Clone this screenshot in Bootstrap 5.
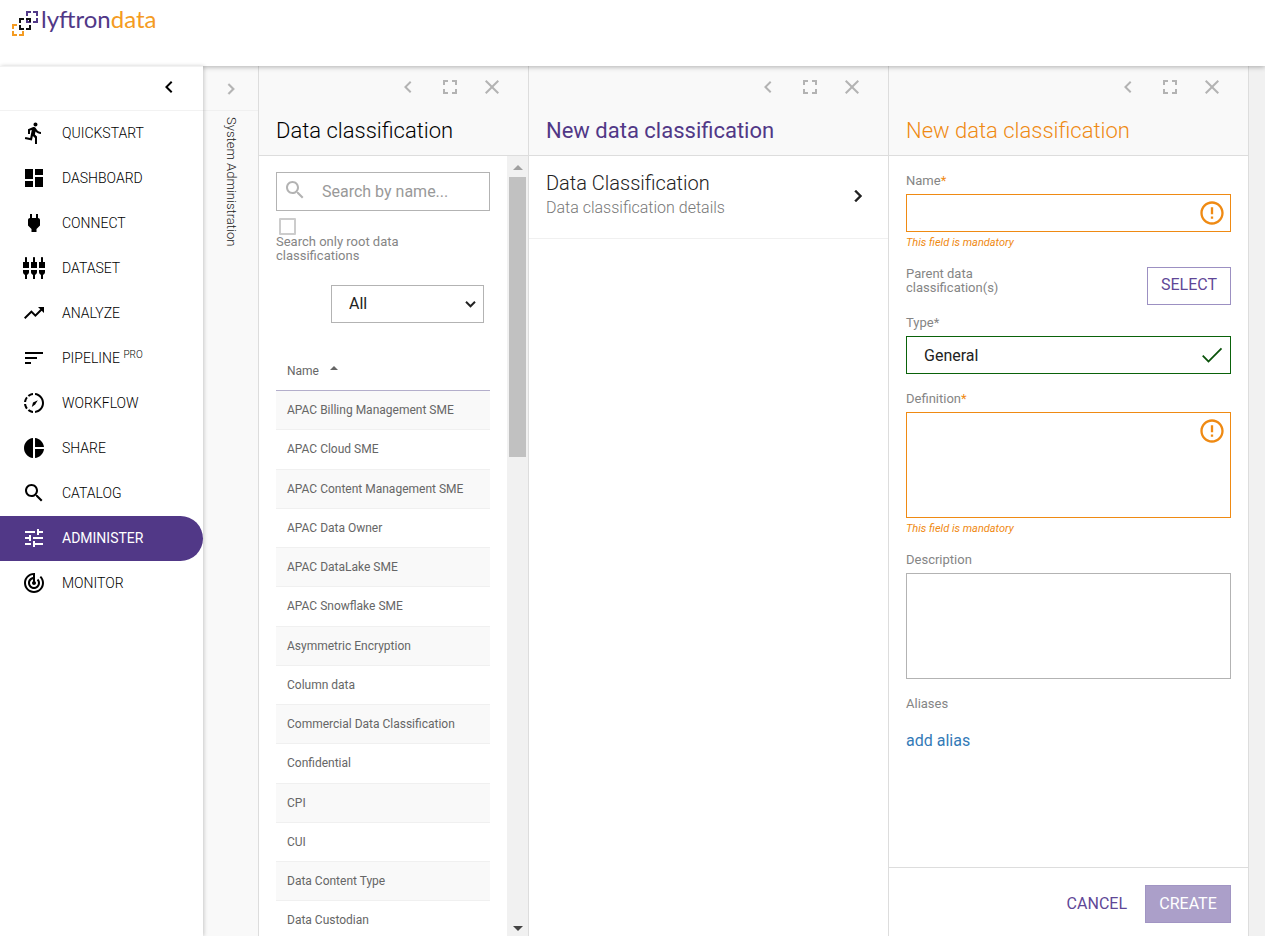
<!DOCTYPE html>
<html lang="en">
<head>
<meta charset="utf-8">
<meta name="viewport" content="width=device-width, initial-scale=1">
<title>Lyftrondata – Data classification</title>
<link href="https://cdn.jsdelivr.net/npm/bootstrap@5.3.0/dist/css/bootstrap.min.css" rel="stylesheet">
<style>
:root { --purple: #513887; --orange: #ef8a13; --grey: #b3b3b3; --line: #ddd; }
body { font-family: Roboto, "Liberation Sans", sans-serif; font-size: 16px; line-height: 20px; color: #222; background: #f1f1f1; }
svg { fill: currentColor; flex: none; display: block; }
.i22 { width: 22px; height: 22px; } .i24 { width: 24px; height: 24px; } .i28 { width: 28px; height: 28px; }
.topbar { height: 66px; padding: 8px 11px; z-index: 3; box-shadow: 0 1px 5px rgba(0,0,0,.3); }
.brand { font-family: Lato, sans-serif; font-size: 24px; line-height: 22px; color: var(--purple); text-decoration: none; }
.brand b { color: #f49b22; font-weight: 400; }
.brand svg { fill: none; stroke-width: 2; }
.side { width: 203px; z-index: 4; border-top: 1px solid #f2f2f2; box-shadow: 1px 0 4px rgba(0,0,0,.2); }
.side-toggle { height: 44px; padding: 8px 22px 0; border-bottom: 1px solid #f2f2f2; }
.side .nav-link { height: 45px; padding: 0 22px 2px; gap: 16px; font-size: 14px; font-weight: 300; color: #000; }
.side .nav-link.active { background: var(--purple); color: #fff; font-weight: 400; border-radius: 0 23px 23px 0; }
.side sup { font-size: 10px; top: -5px; }
.strip { width: 56px; background: #f9f9f9; border-right: 1px solid var(--line); font-size: 13px; }
.strip-top { height: 45px; padding-top: 2px; border-bottom: 1px solid #f0f0f0; color: var(--grey); }
.strip-name { writing-mode: vertical-rl; font-weight: 300; padding-top: 6px; }
.pane { width: 360px; border-right: 1px solid var(--line); }
.pane-narrow { width: 270px; }
.pane-head { height: 90px; padding: 9px 24px 0 17px; background: #f9f9f9; border-bottom: 1px solid var(--line); }
.pane-tools { gap: 18px; color: var(--grey); }
.pane-tools button, .plain { background: none; border: 0; padding: 0; color: inherit; }
.pane-head h1 { font-size: 22px; line-height: 26px; font-weight: 300; margin: 19px 0 0; color: #000; }
.pane-head h1.chosen { font-weight: 400; color: var(--purple); }
.pane-head h1.edit { color: var(--orange); }
.pane-body { min-height: 0; }
.list-area { padding: 16px 17px 0; }
.form-control, .form-select { border: 1px solid var(--grey); border-radius: 0; color: #222; font-size: 16px; line-height: 20px; padding: 8px 17px; height: 38px; background-color: #fff; }
textarea.form-control { height: 106px; resize: none; }
.warn.form-control { border-color: var(--orange); }
.good.form-control { border-color: #0a620a; }
.search .form-control { height: 39px; padding-left: 45px; padding-right: 8px; }
.search .form-control::placeholder { color: #999; }
.search svg { position: absolute; left: 7px; top: 6px; color: var(--grey); }
.field-icon { position: absolute; right: 5px; top: 5px; color: var(--orange); }
.field-icon.ok { color: #0a520a; }
.root-only { appearance: none; margin: 7px 0 0 3px; display: block; width: 17px; height: 17px; border: 2px solid #ccc; border-radius: 1px; }
.root-label { padding-right: 60px; }
label, .lab { display: block; font-size: 13px; line-height: 14px; color: #858585; }
label b { font-weight: 400; color: var(--orange); }
.form-area { padding: 18px 17px 0; }
.field { margin-bottom: 18px; }
.field > label { padding-bottom: 6px; }
.parents { margin-bottom: 11px; }
.note { font-size: 11px; line-height: 12px; font-style: italic; color: var(--orange); margin: 5px 0 0; }
.form-select { width: 153px; margin: 22px 0 0 55px; background-size: 15px 12px; background-position: right 5px center;
  background-image: url("data:image/svg+xml,%3csvg xmlns='http://www.w3.org/2000/svg' viewBox='0 0 16 16'%3e%3cpath fill='none' stroke='%23222' stroke-width='2.6' d='M2 5l6 6 6-6'/%3e%3c/svg%3e"); }
.names { font-size: 12px; line-height: 1.52; color: #666; margin: 29px 0 0; }
.names th, .names td { padding: 10px 11px; border: 0; border-bottom: 1px solid #f0f0f0; color: #666; background: none; box-shadow: none; }
.names th { font-weight: 400; border-color: #b3aecb; }
.names tbody tr:nth-child(odd) { background: #f9f9f9; }
.caret { display: inline-block; border: 4px solid transparent; border-top: 0; border-bottom-color: #666; margin: 0 0 5px 8px; }
.bar { width: 21px; background: #f1f1f1; }
.bar i { display: block; border: 5px solid transparent; width: 0; }
.bar .up { border-top: 0; border-bottom-color: #a0a0a0; margin: 9px 0 7px 6px; }
.bar .thumb { background: #c1c1c1; width: 17px; height: 280px; margin-left: 2px; }
.bar .down { border-bottom: 0; border-top-color: #444; margin: auto 0 5px 6px; }
.entry { height: 83px; padding: 15px 18px 0 17px; border-bottom: 1px solid #f0f0f0; color: #222; text-decoration: none; }
.entry h2 { font-size: 20px; line-height: 24px; font-weight: 300; margin: 0; }
.entry p { font-weight: 300; line-height: 20px; margin: 3px 0 0; color: #777; }
.entry svg { margin-top: 13px; }
.act { border-radius: 0; font-size: 16px; line-height: 20px; height: 38px; padding: 0; }
.act-line { border: 1px solid #9c90c2; color: #5f4797; width: 84px; padding-bottom: 2px; }
.act-fill, .act-fill:disabled { background: #ab9fc9; border: 1px solid #a195c3; color: #fff; width: 86px; opacity: 1; }
.act-text { color: #5f4797; padding: 0 18px; border: 0; }
.foot { height: 69px; padding: 17px 17px 0; border-top: 1px solid var(--line); }
.alias { color: #337ab7; text-decoration: none; margin-top: 20px; }
</style>
</head>
<body class="vh-100 d-flex flex-column overflow-hidden">
<svg class="d-none" xmlns="http://www.w3.org/2000/svg">
<symbol id="left" viewBox="0 0 24 24"><path d="M15.41 7.41L14 6l-6 6 6 6 1.41-1.41L10.83 12z"/></symbol>
<symbol id="right" viewBox="0 0 24 24"><path d="M10 6L8.59 7.41 13.17 12l-4.58 4.59L10 18l6-6z" stroke="currentColor" stroke-width=".4"/></symbol>
<symbol id="full" viewBox="0 0 24 24"><path d="M7 14H5v5h5v-2H7v-3zm-2-4h2V7h3V5H5v5zm12 7h-3v2h5v-5h-2v3zM14 5v2h3v3h2V5h-5z"/></symbol>
<symbol id="close" viewBox="0 0 24 24"><path d="M19 6.41L17.59 5 12 10.59 6.41 5 5 6.41 10.59 12 5 17.59 6.41 19 12 13.41 17.59 19 19 17.59 13.41 12z"/></symbol>
<symbol id="search" viewBox="0 0 24 24"><path d="M15.5 14h-.79l-.28-.27C15.41 12.59 16 11.11 16 9.5 16 5.91 13.09 3 9.5 3S3 5.91 3 9.5 5.91 16 9.5 16c1.61 0 3.09-.59 4.23-1.57l.27.28v.79l5 4.99L20.49 19l-4.99-5zm-6 0C7.01 14 5 11.99 5 9.5S7.01 5 9.5 5 14 7.01 14 9.5 11.99 14 9.5 14z"/></symbol>
<symbol id="alert" viewBox="0 0 24 24"><path d="M11 15h2v2h-2zm0-8h2v6h-2zm.99-5C6.47 2 2 6.48 2 12s4.47 10 9.99 10C17.52 22 22 17.52 22 12S17.52 2 11.99 2zM12 20c-4.42 0-8-3.58-8-8s3.58-8 8-8 8 3.58 8 8-3.58 8-8 8z"/></symbol>
<symbol id="check" viewBox="0 0 24 24"><path d="M9 16.4L4.6 12l-1.1 1.1L9 18.6 20.7 6.9l-1.1-1.1z"/></symbol>
</svg>

<header class="topbar bg-white position-relative flex-shrink-0">
  <a class="brand d-inline-flex" href="#">
    <svg width="30" height="30" viewBox="0 0 30 30">
      <path stroke="#f49b22" d="M2 21v-4h4M12 23v4H8M6 27H2v-4"/>
      <path stroke="#513887" d="M16 8V4h4M22 4h4v4M26 10v4h-4M20 14h-4v-4"/>
      <path stroke="#111" d="M9 15v-4h4M15 11h4v3M19 17v4h-4M13 21H9v-4"/>
    </svg>lyftron<b>data</b></a>
</header>

<div class="pane-body d-flex flex-grow-1">
  <aside class="side bg-white flex-shrink-0 position-relative">
    <div class="side-toggle d-flex align-items-start justify-content-end"><button class="plain text-black" aria-label="Collapse menu"><svg class="i24"><use href="#left"/></svg></button></div>
    <nav class="nav flex-column">
      <a class="nav-link d-flex align-items-center" href="#"><svg class="i24" viewBox="0 0 24 24"><path d="M13.49 5.48c1.1 0 2-.9 2-2s-.9-2-2-2-2 .9-2 2 .9 2 2 2zm-3.6 13.9l1-4.4 2.1 2v6h2v-7.5l-2.1-2 .6-3c1.3 1.5 3.3 2.5 5.5 2.5v-2c-1.9 0-3.5-1-4.3-2.4l-1-1.6c-.4-.6-1-1-1.7-1-.3 0-.5.1-.8.1l-5.2 2.2v4.7h2v-3.4l1.8-.7-1.6 8.1-4.9-1-.4 2 7 1.4z"/></svg>QUICKSTART</a>
      <a class="nav-link d-flex align-items-center" href="#"><svg class="i24" viewBox="0 0 24 24"><path d="M3 13h8V3H3v10zm0 8h8v-6H3v6zm10 0h8V11h-8v10zm0-18v6h8V3h-8z"/></svg>DASHBOARD</a>
      <a class="nav-link d-flex align-items-center" href="#"><svg class="i24" viewBox="0 0 24 24"><path d="M16.01 7L16 3h-2v4h-4V3H8v4h-.01C7 6.99 6 7.99 6 8.99v5.49L9.5 18v3h5v-3l3.5-3.51v-5.5c0-1-1-2-1.99-1.99z"/></svg>CONNECT</a>
      <a class="nav-link d-flex align-items-center" href="#"><svg class="i24" viewBox="0 0 24 24"><path d="M5 2c0-.55-.45-1-1-1s-1 .45-1 1v4H1v6h6V6H5V2zm4 14c0 1.3.84 2.4 2 2.82V23h2v-4.18c1.16-.41 2-1.51 2-2.82v-2H9v2zm-8 0c0 1.3.84 2.4 2 2.82V23h2v-4.18C6.16 18.4 7 17.3 7 16v-2H1v2zM21 6V2c0-.55-.45-1-1-1s-1 .45-1 1v4h-2v6h6V6h-2zm-8-4c0-.55-.45-1-1-1s-1 .45-1 1v4H9v6h6V6h-2V2zm4 14c0 1.3.84 2.4 2 2.82V23h2v-4.18c1.16-.41 2-1.51 2-2.82v-2h-6v2z"/></svg>DATASET</a>
      <a class="nav-link d-flex align-items-center" href="#"><svg class="i24" viewBox="0 0 24 24"><path d="M16 6l2.29 2.29-4.88 4.88-4-4L2 16.59 3.41 18l6-6 4 4 6.3-6.29L22 12V6z"/></svg>ANALYZE</a>
      <a class="nav-link d-flex align-items-center" href="#"><svg class="i24" viewBox="0 0 24 24"><path d="M3 18h6v-2H3v2zM3 6v2h18V6H3zm0 7h12v-2H3v2z"/></svg><span>PIPELINE <sup>PRO</sup></span></a>
      <a class="nav-link d-flex align-items-center" href="#"><svg class="i24" viewBox="0 0 24 24"><path d="M11 4.07V2.05c-2.01.2-3.84 1-5.32 2.21L7.1 5.69c1.11-.86 2.44-1.44 3.9-1.62zM5.69 7.1L4.26 5.68C3.05 7.16 2.25 8.99 2.05 11h2.02c.18-1.46.76-2.79 1.62-3.9zM4.07 13H2.05c.2 2.01 1 3.84 2.21 5.32l1.43-1.43c-.86-1.1-1.44-2.43-1.62-3.89zm1.61 6.74C7.16 20.95 9 21.75 11 21.95v-2.02c-1.46-.18-2.79-.76-3.9-1.62l-1.42 1.43zM22 12c0 5.16-3.92 9.42-8.95 9.95v-2.02C16.97 19.41 20 16.05 20 12s-3.03-7.41-6.95-7.93V2.05C18.08 2.58 22 6.84 22 12zM15.8 9.2l-4.8 2.2L9.8 16l3.4-2.4z"/></svg>WORKFLOW</a>
      <a class="nav-link d-flex align-items-center" href="#"><svg class="i24" viewBox="0 0 24 24"><path d="M11 2v20c-5.07-.5-9-4.79-9-10s3.93-9.5 9-10zm2.03 0v8.99H22c-.47-4.74-4.24-8.52-8.97-8.99zm0 11.01V22c4.74-.47 8.5-4.25 8.97-8.99h-8.97z"/></svg>SHARE</a>
      <a class="nav-link d-flex align-items-center" href="#"><svg class="i24"><use href="#search"/></svg>CATALOG</a>
      <a class="nav-link active d-flex align-items-center" href="#"><svg class="i24" viewBox="0 0 24 24"><path d="M3 17v2h6v-2H3zM3 5v2h10V5H3zm10 16v-2h8v-2h-8v-2h-2v6h2zM7 9v2H3v2h4v2h2V9H7zm14 4v-2H11v2h10zm-6-4h2V7h4V5h-4V3h-2v6z"/></svg>ADMINISTER</a>
      <a class="nav-link d-flex align-items-center" href="#"><svg class="i24" viewBox="0 0 24 24"><path d="M19.07 4.93l-1.41 1.41C19.1 7.79 20 9.79 20 12c0 4.42-3.58 8-8 8s-8-3.58-8-8c0-4.08 3.05-7.44 7-7.93v2.02C8.16 6.57 6 9.03 6 12c0 3.31 2.69 6 6 6s6-2.69 6-6c0-1.66-.67-3.16-1.76-4.24l-1.41 1.41C15.55 9.9 16 10.9 16 12c0 2.21-1.79 4-4 4s-4-1.79-4-4c0-1.86 1.28-3.41 3-3.86v2.14c-.6.35-1 .98-1 1.72 0 1.1.9 2 2 2s2-.9 2-2c0-.74-.4-1.38-1-1.72V2h-1C6.48 2 2 6.48 2 12s4.48 10 10 10 10-4.48 10-10c0-2.76-1.12-5.26-2.93-7.07z"/></svg>MONITOR</a>
    </nav>
  </aside>

  <section class="strip flex-shrink-0 d-flex flex-column align-items-center">
    <div class="strip-top w-100 d-flex align-items-center justify-content-center"><button class="plain" aria-label="Expand System Administration"><svg class="i22"><use href="#right"/></svg></button></div>
    <div class="strip-name">System Administration</div>
  </section>

  <section class="pane pane-narrow bg-white flex-shrink-0 d-flex flex-column">
    <div class="pane-head flex-shrink-0">
      <div class="pane-tools d-flex justify-content-end"><button aria-label="Collapse"><svg class="i24"><use href="#left"/></svg></button><button aria-label="Full screen"><svg class="i24"><use href="#full"/></svg></button><button aria-label="Close"><svg class="i24"><use href="#close"/></svg></button></div>
      <h1>Data classification</h1>
    </div>
    <div class="pane-body d-flex flex-grow-1">
      <div class="list-area flex-grow-1 overflow-hidden">
        <div class="search position-relative"><input class="form-control" type="search" placeholder="Search by name..." aria-label="Search by name"><svg class="i24"><use href="#search"/></svg></div>
        <input class="root-only" type="checkbox" id="root"><label class="root-label" for="root">Search only root data classifications</label>
        <select class="form-select" aria-label="Filter"><option>All</option></select>
        <table class="table names">
          <thead><tr><th scope="col">Name <span class="caret"></span></th></tr></thead>
          <tbody>
            <tr><td>APAC Billing Management SME</td></tr><tr><td>APAC Cloud SME</td></tr>
            <tr><td>APAC Content Management SME</td></tr><tr><td>APAC Data Owner</td></tr>
            <tr><td>APAC DataLake SME</td></tr><tr><td>APAC Snowflake SME</td></tr>
            <tr><td>Asymmetric Encryption</td></tr><tr><td>Column data</td></tr>
            <tr><td>Commercial Data Classification</td></tr><tr><td>Confidential</td></tr>
            <tr><td>CPI</td></tr><tr><td>CUI</td></tr>
            <tr><td>Data Content Type</td></tr><tr><td>Data Custodian</td></tr>
          </tbody>
        </table>
      </div>
      <div class="bar flex-shrink-0 d-flex flex-column" aria-hidden="true"><i class="up"></i><div class="thumb"></div><i class="down"></i></div>
    </div>
  </section>

  <section class="pane bg-white flex-shrink-0">
    <div class="pane-head">
      <div class="pane-tools d-flex justify-content-end"><button aria-label="Collapse"><svg class="i24"><use href="#left"/></svg></button><button aria-label="Full screen"><svg class="i24"><use href="#full"/></svg></button><button aria-label="Close"><svg class="i24"><use href="#close"/></svg></button></div>
      <h1 class="chosen">New data classification</h1>
    </div>
    <a class="entry d-flex justify-content-between" href="#"><div><h2>Data Classification</h2><p>Data classification details</p></div><svg class="i24"><use href="#right"/></svg></a>
  </section>

  <section class="pane bg-white flex-shrink-0 d-flex flex-column">
    <div class="pane-head flex-shrink-0">
      <div class="pane-tools d-flex justify-content-end"><button aria-label="Collapse"><svg class="i24"><use href="#left"/></svg></button><button aria-label="Full screen"><svg class="i24"><use href="#full"/></svg></button><button aria-label="Close"><svg class="i24"><use href="#close"/></svg></button></div>
      <h1 class="edit">New data classification</h1>
    </div>
    <form class="form-area flex-grow-1 overflow-hidden">
      <div class="field"><label for="name">Name<b>*</b></label>
        <div class="position-relative"><input class="form-control warn" id="name"><svg class="i28 field-icon"><use href="#alert"/></svg></div>
        <p class="note">This field is mandatory</p></div>
      <div class="parents d-flex justify-content-between"><div class="lab">Parent data<br>classification(s)</div><button type="button" class="btn act act-line">SELECT</button></div>
      <div class="field"><label for="type">Type*</label>
        <div class="position-relative"><input class="form-control good" id="type" value="General"><svg class="i28 field-icon ok"><use href="#check"/></svg></div></div>
      <div class="field"><label for="def">Definition<b>*</b></label>
        <div class="position-relative"><textarea class="form-control warn d-block" id="def"></textarea><svg class="i28 field-icon"><use href="#alert"/></svg></div>
        <p class="note">This field is mandatory</p></div>
      <div class="field"><label for="desc">Description</label><textarea class="form-control d-block" id="desc"></textarea></div>
      <div class="lab">Aliases</div>
      <a class="alias d-inline-block" href="#">add alias</a>
    </form>
    <div class="foot flex-shrink-0 d-flex justify-content-end align-items-start"><button class="btn act act-text">CANCEL</button><button class="btn act act-fill" disabled>CREATE</button></div>
  </section>
</div>
<script src="https://cdn.jsdelivr.net/npm/bootstrap@5.3.0/dist/js/bootstrap.bundle.min.js"></script>
</body>
</html>
